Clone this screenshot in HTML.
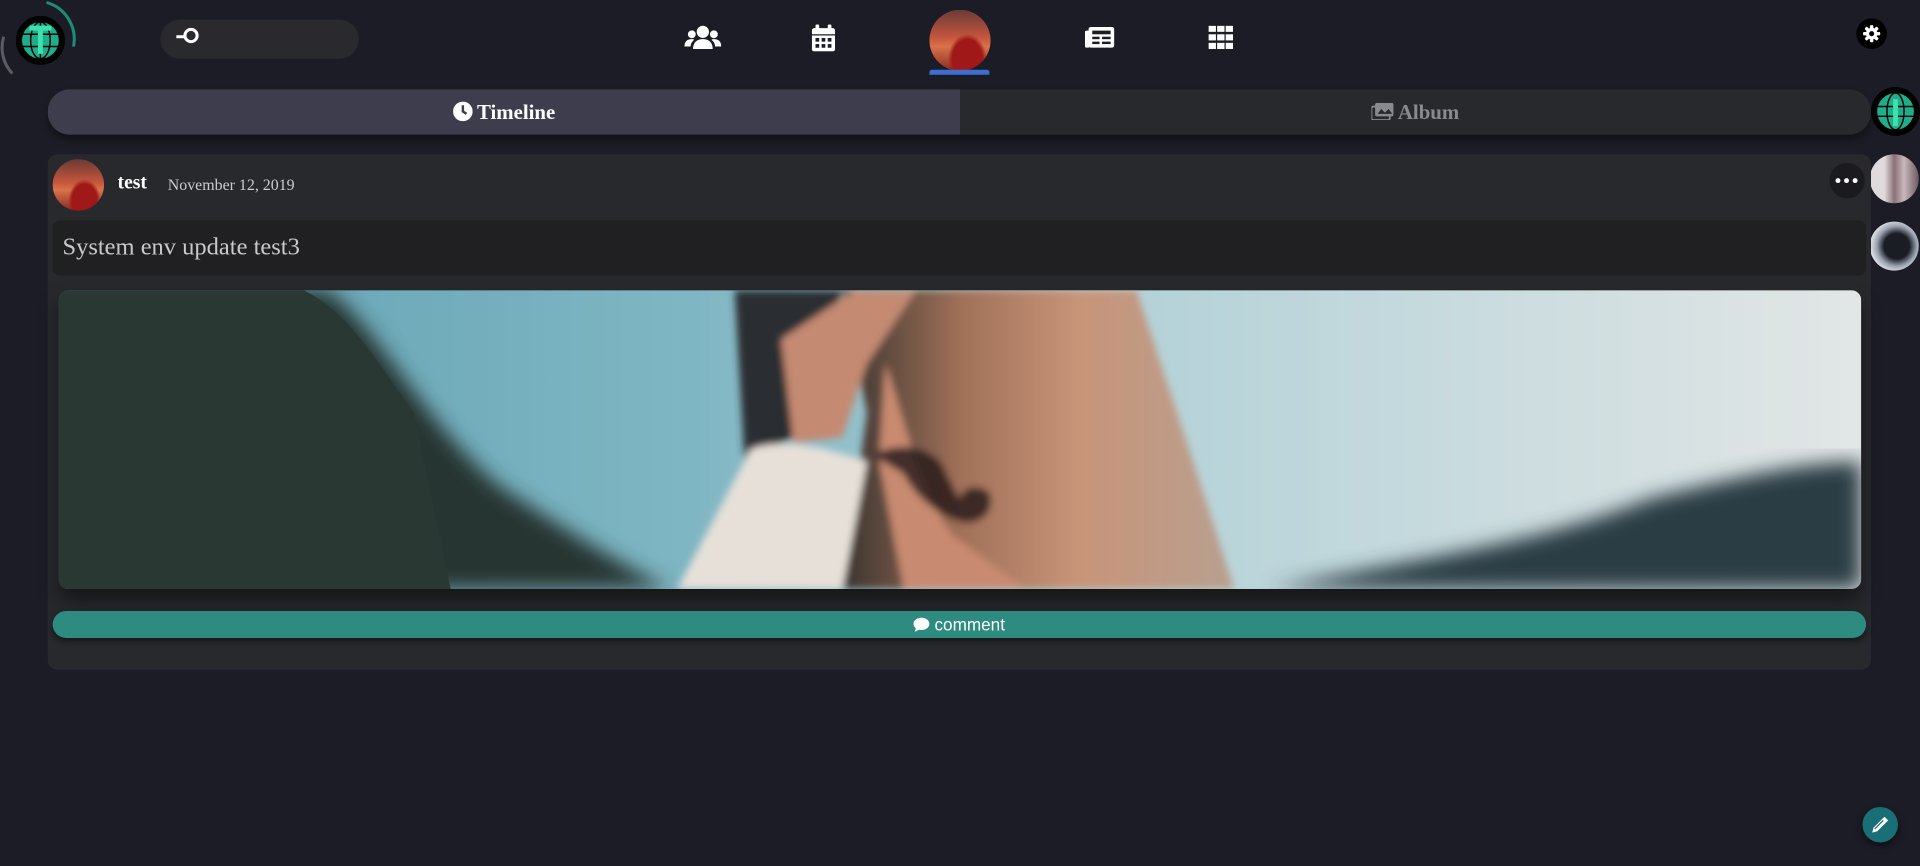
<!DOCTYPE html>
<html><head><meta charset="utf-8"><style>
html,body{margin:0;padding:0;width:1920px;height:866px;overflow:hidden;background:#1c1c26;}
#w{position:absolute;left:0;top:0;width:1568px;height:707px;transform:scale(1.22449);transform-origin:0 0;background:#1c1c26;font-family:"Liberation Serif",serif;}
.a{position:absolute;}
.av{border-radius:50%;background:radial-gradient(ellipse at 62% 80%,#a01818 0 28%,transparent 36%),linear-gradient(180deg,#6b3a35 0%,#c4563d 45%,#d9734a 60%,#8a2a22 100%);}
</style></head><body><div id="w">
<!-- logo -->
<svg class="a" style="left:0;top:0" width="70" height="70" viewBox="0 0 70 70">
<path d="M38 2 A31 31 0 0 1 60 38" stroke="#1fa88c" stroke-width="2.5" fill="none" opacity=".8"/>
<path d="M10 60 A31 31 0 0 1 3 30" stroke="#999" stroke-width="2.5" fill="none" opacity=".5"/>
<circle cx="33" cy="33" r="20" fill="#000"/>
<circle cx="33" cy="33" r="15" fill="#1fae8c"/>
<g stroke="#000" stroke-width="1.2" fill="none"><ellipse cx="33" cy="33" rx="8" ry="15"/><line x1="18" y1="28" x2="48" y2="28"/><line x1="18" y1="38" x2="48" y2="38"/><line x1="33" y1="18" x2="33" y2="48"/></g>
<rect x="31" y="22" width="4" height="22" fill="#3ee0b0"/><rect x="24" y="21" width="18" height="4" fill="#3ee0b0"/>
</svg>
<!-- search -->
<div class="a" style="left:131px;top:16px;width:162px;height:32px;border-radius:16px;background:#2a2a2e"></div>
<svg class="a" style="left:142px;top:22px" width="22" height="14"><circle cx="14" cy="7" r="5" stroke="#fff" stroke-width="2.5" fill="none"/><line x1="2" y1="8" x2="9" y2="8" stroke="#fff" stroke-width="2.5"/></svg>
<!-- nav icons -->
<svg class="a" style="left:559px;top:19px" width="30" height="24" viewBox="0 0 30 24"><g fill="#fff"><circle cx="15" cy="7" r="5"/><path d="M7 21c0-6 4-8 8-8s8 2 8 8z"/><circle cx="6" cy="9" r="3.2"/><circle cx="24" cy="9" r="3.2"/><path d="M0 19c0-4 2-6 6-6 1 0 1.5.2 2 .5-2 1.5-3 3.5-3 5.5z"/><path d="M30 19c0-4-2-6-6-6-1 0-1.5.2-2 .5 2 1.5 3 3.5 3 5.5z"/></g></svg>
<svg class="a" style="left:663px;top:20px" width="19" height="22" viewBox="0 0 19 22"><g fill="#fff"><rect x="3" y="0" width="3" height="5" rx="1"/><rect x="13" y="0" width="3" height="5" rx="1"/><path d="M0 5a2 2 0 0 1 2-2h15a2 2 0 0 1 2 2v3H0z"/><path d="M0 9h19v11a2 2 0 0 1-2 2H2a2 2 0 0 1-2-2z"/></g><g fill="#1c1c26"><rect x="3" y="11" width="3" height="3"/><rect x="8" y="11" width="3" height="3"/><rect x="13" y="11" width="3" height="3"/><rect x="3" y="16" width="3" height="3"/><rect x="8" y="16" width="3" height="3"/><rect x="13" y="16" width="3" height="3"/></g></svg>
<div class="a av" style="left:759px;top:8px;width:50px;height:50px"></div>
<div class="a" style="left:759px;top:57px;width:49px;height:4px;background:#3b6fd1;border-radius:2px 2px 0 0"></div>
<svg class="a" style="left:886px;top:22px" width="24" height="17" viewBox="0 0 24 17"><rect x="3" y="0" width="21" height="17" rx="2" fill="#fff"/><rect x="0" y="3" width="4" height="14" rx="1.5" fill="#fff"/><g fill="#1c1c26"><rect x="6" y="3" width="15" height="3"/><rect x="6" y="8" width="6" height="2"/><rect x="14" y="8" width="7" height="2"/><rect x="6" y="12" width="6" height="2"/><rect x="14" y="12" width="7" height="2"/></g></svg>
<svg class="a" style="left:987px;top:21px" width="20" height="19"><g fill="#fff"><rect x="0" y="0" width="6" height="5"/><rect x="7" y="0" width="6" height="5"/><rect x="14" y="0" width="6" height="5"/><rect x="0" y="7" width="6" height="5"/><rect x="7" y="7" width="6" height="5"/><rect x="14" y="7" width="6" height="5"/><rect x="0" y="14" width="6" height="5"/><rect x="7" y="14" width="6" height="5"/><rect x="14" y="14" width="6" height="5"/></g></svg>
<!-- settings -->
<div class="a" style="left:1516px;top:15px;width:25px;height:25px;border-radius:50%;background:#000"></div>
<svg class="a" style="left:1521px;top:20px" width="15" height="15" viewBox="0 0 16 16"><g fill="#fff"><circle cx="8" cy="8" r="5"/><rect x="6.5" y="0.5" width="3" height="15" rx="1"/><rect x="0.5" y="6.5" width="15" height="3" rx="1"/><rect x="6.5" y="0.5" width="3" height="15" rx="1" transform="rotate(45 8 8)"/><rect x="6.5" y="0.5" width="3" height="15" rx="1" transform="rotate(-45 8 8)"/></g><circle cx="8" cy="8" r="2.2" fill="#000"/></svg>
<!-- tabs -->
<div class="a" style="left:39px;top:73px;width:1489px;height:37px;border-radius:18px;overflow:hidden;box-shadow:0 4px 6px rgba(0,0,0,.4);background:#28292d">
<div class="a" style="left:0;top:0;width:745px;height:37px;background:#3e3d4e"></div>
<div class="a" style="left:0;top:0;width:745px;height:37px;line-height:37px;text-align:center;color:#fff;font-weight:bold;font-size:17px"><svg width="16" height="16" style="vertical-align:-2px"><circle cx="8" cy="8" r="8" fill="#fff"/><path d="M8 3v5l3 2" stroke="#3e3d4e" stroke-width="2" fill="none"/></svg> Timeline</div>
<div class="a" style="left:745px;top:0;width:744px;height:37px;line-height:37px;text-align:center;color:#8a8a8e;font-weight:bold;font-size:17px"><svg width="18" height="14" style="vertical-align:-1px"><rect x="3" y="0" width="15" height="11" rx="1.5" fill="#8a8a8e"/><rect x="0" y="3" width="15" height="11" rx="1.5" fill="none" stroke="#8a8a8e" stroke-width="1.5"/><path d="M5 9l3-4 3 3 3-3 3 4z" fill="#28292d"/></svg> Album</div>
</div>
<!-- right sidebar -->
<svg class="a" style="left:1527px;top:70px" width="42" height="42"><circle cx="21" cy="21" r="20" fill="#000"/><circle cx="21" cy="21" r="15" fill="#1fae8c"/><g stroke="#000" stroke-width="1.2" fill="none"><ellipse cx="21" cy="21" rx="7" ry="15"/><line x1="6" y1="17" x2="36" y2="17"/><line x1="6" y1="25" x2="36" y2="25"/></g><rect x="19" y="11" width="4" height="22" fill="#3ee0b0"/></svg>
<div class="a" style="left:1527px;top:126px;width:40px;height:40px;border-radius:50%;background:linear-gradient(90deg,#e0dadc 0 30%,#8a7078 50%,#c8b8bc 70%,#6a5a60 100%)"></div>
<div class="a" style="left:1527px;top:181px;width:40px;height:40px;border-radius:50%;background:radial-gradient(circle at 55% 50%,#1a1d24 0 35%,#9aa3b0 55%,#e8ebef 75%)"></div>
<!-- card -->
<div class="a" style="left:39px;top:126px;width:1489px;height:421px;border-radius:8px;background:#28292d"></div>
<div class="a av" style="left:43px;top:130px;width:42px;height:42px"></div>
<div class="a" style="left:96px;top:141px;color:#fff;font-weight:bold;font-size:16px">test</div>
<div class="a" style="left:137px;top:143px;color:#ccc;font-size:13px">November 12, 2019</div>
<div class="a" style="left:1494px;top:133px;width:29px;height:29px;border-radius:50%;background:#1b1b1f"></div>
<svg class="a" style="left:1498px;top:145px" width="20" height="5"><circle cx="3" cy="2.5" r="2" fill="#fff"/><circle cx="10" cy="2.5" r="2" fill="#fff"/><circle cx="17" cy="2.5" r="2" fill="#fff"/></svg>
<div class="a" style="left:43px;top:180px;width:1481px;height:45px;border-radius:6px;background:#202022"></div>
<div class="a" style="left:51px;top:191px;color:#c9c9c9;font-size:20px">System env update test3</div>
<!-- image -->
<svg class="a" style="left:48px;top:237px;border-radius:8px;box-shadow:0 10px 16px rgba(0,0,0,.45)" width="1472" height="244" viewBox="0 0 1472 244">
<defs>
<linearGradient id="sky" x1="0" x2="1" y1="0" y2="0"><stop offset="0" stop-color="#5e9fb0"/><stop offset=".35" stop-color="#7fb6c3"/><stop offset=".6" stop-color="#b4d2d8"/><stop offset="1" stop-color="#e2e6e6"/></linearGradient>
<linearGradient id="hair" x1="0" x2="1"><stop offset="0" stop-color="#3a3430"/><stop offset=".3" stop-color="#a07058"/><stop offset=".6" stop-color="#c89478"/><stop offset="1" stop-color="#b8a090"/></linearGradient>
<filter id="bl"><feGaussianBlur stdDeviation="8"/></filter>
<filter id="bs"><feGaussianBlur stdDeviation="3"/></filter>
</defs>
<rect width="1472" height="244" fill="url(#sky)"/>
<path d="M0 0 L220 0 C260 30 300 110 360 160 C420 200 470 230 500 244 L0 244Z" fill="#283631" filter="url(#bl)"/>
<path d="M0 0h200 C240 20 260 60 290 100 L320 244 H0Z" fill="#2a3833"/>
<path d="M990 244 C1100 220 1200 210 1300 170 C1380 150 1430 140 1472 140 V244Z" fill="#2c3e45" filter="url(#bl)"/>
<g filter="url(#bs)">
<path d="M552 0 H640 L600 120 L560 140Z" fill="#2a2d32"/>
<path d="M640 0 H880 C900 60 930 150 960 244 H640 L660 100Z" fill="url(#hair)"/>
<path d="M675 60 C690 100 700 160 730 200 L790 244 H690 L670 140Z" fill="#c88a70"/>
<path d="M665 135 C680 125 705 125 720 140 L735 170 C740 160 750 158 760 165 C765 180 755 190 740 190 C720 185 700 170 690 150Z" fill="#2a1c1c" opacity=".85"/>
<path d="M565 130 C590 120 625 128 660 140 L640 244 H505Z" fill="#e6e0d8"/>
<path d="M590 40 L650 0 L700 0 L660 60 L640 120 L600 125Z" fill="#c48a72"/>
</g>
</svg>
<!-- comment -->
<div class="a" style="left:43px;top:499px;width:1481px;height:22px;border-radius:11px;background:#2d8b80;box-shadow:0 3px 5px rgba(0,0,0,.45);color:#fff;font-family:'Liberation Sans',sans-serif;font-size:14px;line-height:22px;text-align:center"><svg width="13" height="12" style="vertical-align:-1px"><ellipse cx="6.5" cy="5.5" rx="6.5" ry="5" fill="#fff"/><path d="M2 9 L1 12 L5 10Z" fill="#fff"/></svg> comment</div>
<!-- fab -->
<div class="a" style="left:1521px;top:659px;width:29px;height:29px;border-radius:50%;background:#1a6f77;box-shadow:0 3px 6px rgba(0,0,0,.5)"></div>
<svg class="a" style="left:1527px;top:665px" width="17" height="17"><path d="M2 15 L3 11 L12 2 L15 5 L6 14Z" fill="#fff"/><path d="M4 12 L11 5" stroke="#1a6f77" stroke-width="1"/></svg>
</div></body></html>
